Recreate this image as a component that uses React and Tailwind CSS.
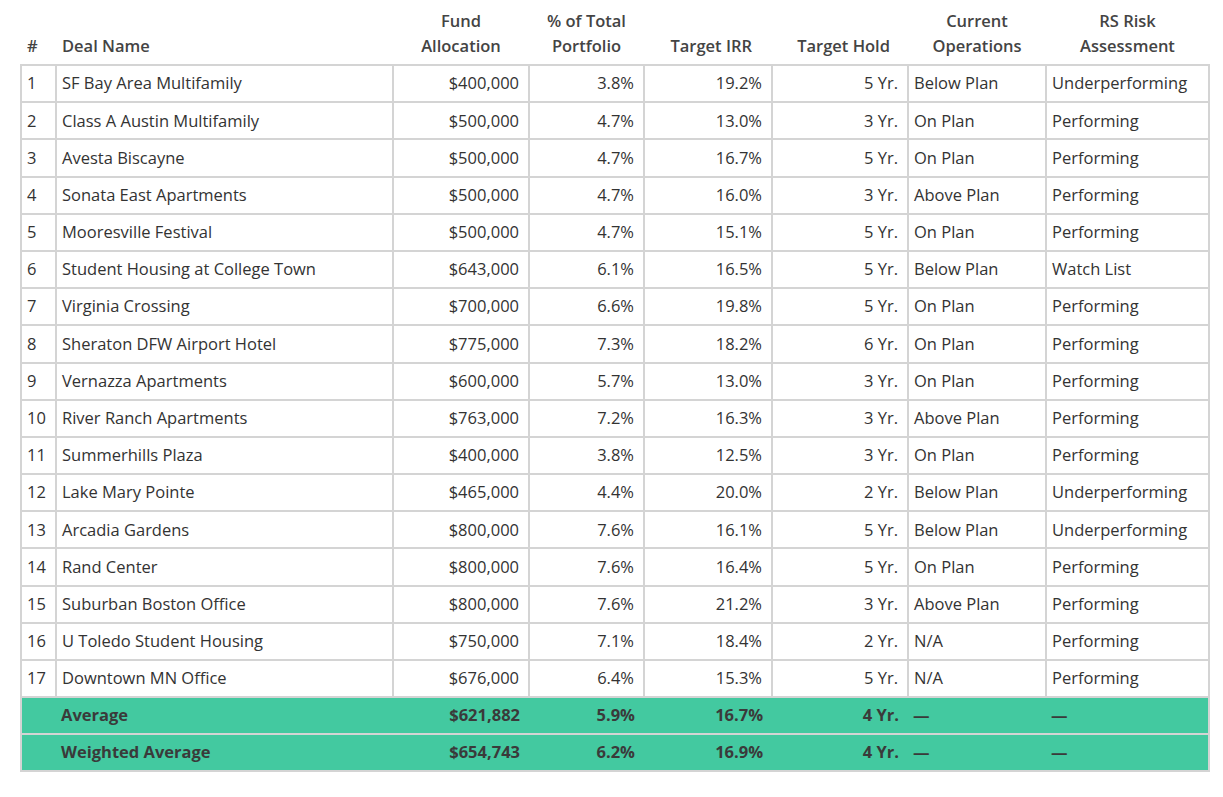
const rows = [
["1","SF Bay Area Multifamily","$400,000","3.8%","19.2%","5 Yr.","Below Plan","Underperforming"],
["2","Class A Austin Multifamily","$500,000","4.7%","13.0%","3 Yr.","On Plan","Performing"],
["3","Avesta Biscayne","$500,000","4.7%","16.7%","5 Yr.","On Plan","Performing"],
["4","Sonata East Apartments","$500,000","4.7%","16.0%","3 Yr.","Above Plan","Performing"],
["5","Mooresville Festival","$500,000","4.7%","15.1%","5 Yr.","On Plan","Performing"],
["6","Student Housing at College Town","$643,000","6.1%","16.5%","5 Yr.","Below Plan","Watch List"],
["7","Virginia Crossing","$700,000","6.6%","19.8%","5 Yr.","On Plan","Performing"],
["8","Sheraton DFW Airport Hotel","$775,000","7.3%","18.2%","6 Yr.","On Plan","Performing"],
["9","Vernazza Apartments","$600,000","5.7%","13.0%","3 Yr.","On Plan","Performing"],
["10","River Ranch Apartments","$763,000","7.2%","16.3%","3 Yr.","Above Plan","Performing"],
["11","Summerhills Plaza","$400,000","3.8%","12.5%","3 Yr.","On Plan","Performing"],
["12","Lake Mary Pointe","$465,000","4.4%","20.0%","2 Yr.","Below Plan","Underperforming"],
["13","Arcadia Gardens","$800,000","7.6%","16.1%","5 Yr.","Below Plan","Underperforming"],
["14","Rand Center","$800,000","7.6%","16.4%","5 Yr.","On Plan","Performing"],
["15","Suburban Boston Office","$800,000","7.6%","21.2%","3 Yr.","Above Plan","Performing"],
["16","U Toledo Student Housing","$750,000","7.1%","18.4%","2 Yr.","N/A","Performing"],
["17","Downtown MN Office","$676,000","6.4%","15.3%","5 Yr.","N/A","Performing"],
];
const totals = [
["Average","$621,882","5.9%","16.7%","4 Yr."],
["Weighted Average","$654,743","6.2%","16.9%","4 Yr."],
];
const widths = [35,337,136,115,128,136,138,163];
const right = [false,false,true,true,true,true,false,false];

export default function App() {
  return (
    <div className="bg-white w-[1223px] h-[797px] pl-[20px] pt-[8px] text-[#333] text-[16.5px]" style={{fontFamily:"'Open Sans', Lato, sans-serif"}}>
      <table className="border-collapse table-fixed" style={{width:1188}}>
        <colgroup>{widths.map((w,i)=><col key={i} style={{width:w}}/>)}</colgroup>
        <thead>
          <tr className="h-[56px] font-semibold text-[#444] leading-[25px] align-bottom">
            <th className="text-left pl-[6px] pb-[6px] font-semibold">#</th>
            <th className="text-left pl-[6px] pb-[6px] font-semibold">Deal Name</th>
            <th className="text-center pb-[6px] font-semibold">Fund<br/>Allocation</th>
            <th className="text-center pb-[6px] font-semibold">% of Total<br/>Portfolio</th>
            <th className="text-right pr-[20px] pb-[6px] font-semibold">Target IRR</th>
            <th className="text-right pr-[18px] pb-[6px] font-semibold">Target Hold</th>
            <th className="text-center pb-[6px] font-semibold">Current<br/>Operations</th>
            <th className="text-center pb-[6px] font-semibold">RS Risk<br/>Assessment</th>
          </tr>
        </thead>
        <tbody>
          {rows.map((r,i)=>(
            <tr key={i} className="h-[37.2px]">
              {r.map((c,j)=>(
                <td key={j} className={`border-2 border-[#d4d4d4] leading-none ${right[j]?"text-right pr-[9px] pl-[6px]":"text-left px-[5px]"}`}>{c}</td>
              ))}
            </tr>
          ))}
          {totals.map((t,i)=>(
            <tr key={"t"+i} className="h-[37px] bg-[#43c9a0] font-bold text-[#3a3a3a]">
              <td className="border-y-2 border-l-2 border-[#d4d4d4]"></td>
              <td className="border-y-2 border-[#d4d4d4] px-[5px]">{t[0]}</td>
              <td className="border-y-2 border-[#d4d4d4] pr-[9px] text-right">{t[1]}</td>
              <td className="border-y-2 border-[#d4d4d4] pr-[9px] text-right">{t[2]}</td>
              <td className="border-y-2 border-[#d4d4d4] pr-[9px] text-right">{t[3]}</td>
              <td className="border-y-2 border-[#d4d4d4] pr-[9px] text-right">{t[4]}</td>
              <td className="border-y-2 border-[#d4d4d4] px-[5px]">—</td>
              <td className="border-y-2 border-r-2 border-[#d4d4d4] px-[5px]">—</td>
            </tr>
          ))}
        </tbody>
      </table>
    </div>
  );
}
